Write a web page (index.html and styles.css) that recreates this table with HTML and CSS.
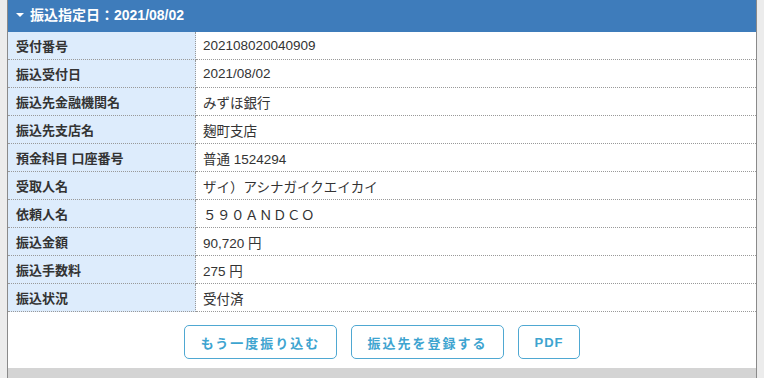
FILE: index.html
```html
<!DOCTYPE html>
<html lang="ja">
<head>
    <meta charset="UTF-8">
    <meta name="viewport" content="width=device-width, initial-scale=1.0">
    <title>振込明細</title>
    <link rel="stylesheet" href="styles.css">
</head>
<body>
    <div class="panel">
        <div class="panel-head"><span class="caret"></span>振込指定日：2021/08/02</div>
        <table class="detail">
            <tr><th>受付番号</th><td>202108020040909</td></tr>
            <tr><th>振込受付日</th><td>2021/08/02</td></tr>
            <tr><th>振込先金融機関名</th><td>みずほ銀行</td></tr>
            <tr><th>振込先支店名</th><td>麹町支店</td></tr>
            <tr><th>預金科目 口座番号</th><td>普通 1524294</td></tr>
            <tr><th>受取人名</th><td>ザイ）アシナガイクエイカイ</td></tr>
            <tr><th>依頼人名</th><td class="wide">５９０ＡＮＤＣＯ</td></tr>
            <tr><th>振込金額</th><td>90,720 円</td></tr>
            <tr><th>振込手数料</th><td>275 円</td></tr>
            <tr><th>振込状況</th><td>受付済</td></tr>
        </table>
        <div class="actions">
            <button class="btn btn-again">もう一度振り込む</button>
            <button class="btn btn-again">振込先を登録する</button>
            <button class="btn btn-pdf">PDF</button>
        </div>
        <div class="next-bar"></div>
    </div>
</body>
</html>
```

FILE: styles.css
```css
body {
    margin: 0;
    background: #ececec;
    font-family: "Liberation Sans", "Noto Sans CJK JP", sans-serif;
    font-size: 13px;
    color: #333;
}
.panel {
    margin-left: 7px;
    width: 748px;
    border-left: 1px solid #8a8a8a;
    border-right: 1px solid #8a8a8a;
    background: #fff;
}
.panel-head {
    height: 32px;
    line-height: 30px;
    background: #3e7cbb;
    color: #fff;
    font-size: 14px;
    font-weight: bold;
    padding-left: 8px;
}
.caret {
    display: inline-block;
    width: 0;
    height: 0;
    border-left: 4px solid transparent;
    border-right: 4px solid transparent;
    border-top: 4px solid #fff;
    margin-right: 6px;
    vertical-align: 3px;
}
.detail {
    width: 100%;
    border-collapse: collapse;
}
.detail th,
.detail td {
    height: 27px;
    padding: 0 7px;
    border-bottom: 1px dotted #999;
    text-align: left;
}
.detail td {
    font-size: 13.5px;
}
.detail th {
    width: 172px;
    padding-left: 8px;
    background: #ddecfc;
    font-weight: bold;
    border-right: 1px dotted #999;
}
.detail td.wide {
    letter-spacing: 0.5px;
}
.actions {
    display: flex;
    justify-content: center;
    gap: 14px;
    padding: 13px 0 9px;
}
.btn {
    height: 34px;
    padding: 0 14px;
    background: #fff;
    border: 1px solid #4fa8d2;
    border-radius: 5px;
    color: #3ea4d0;
    font-family: inherit;
    font-size: 13px;
    font-weight: bold;
    letter-spacing: 2px;
}
.btn-again {
    width: 153px;
}
.btn-pdf {
    width: 62px;
    letter-spacing: 1px;
}
.next-bar {
    height: 10px;
    background: #d4d4d4;
}
```
